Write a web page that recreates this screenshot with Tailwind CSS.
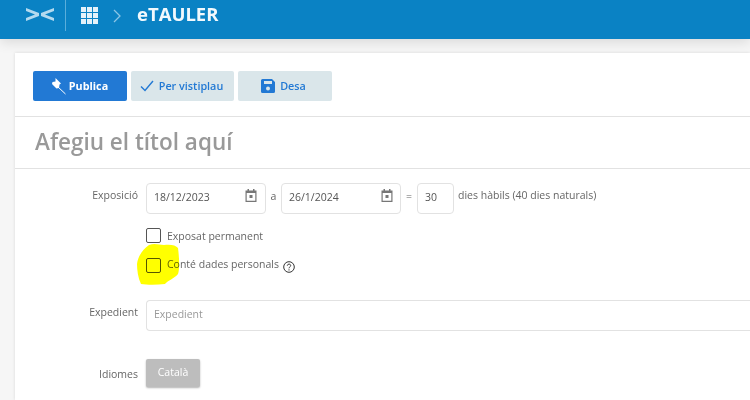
<!DOCTYPE html>
<html lang="ca">
<head>
  <meta charset="UTF-8" />
  <title>eTAULER</title>
  <script src="https://cdn.jsdelivr.net/npm/@tailwindcss/browser@4"></script>
</head>
<body class="h-[400px] w-[750px] overflow-hidden bg-[#f6f6f6] font-['Open_Sans',sans-serif]">
  <!-- capçalera -->
  <header class="flex h-[39px] items-center bg-[#0a82c4] shadow-[0_3px_12px_rgba(0,0,0,0.12)]">
    <svg class="ml-[26px] h-[13px] w-[28px] -translate-y-[5px]" viewBox="0 0 28 13" fill="#b4daef">
      <path d="M0 0 13 5V8L0 13V10L9 6.500 0 3ZM28 0 15 5V8L28 13V10L19 6.500 28 3Z" />
    </svg>
    <div class="ml-[11px] h-[31px] w-px -translate-y-[4px] bg-[#5aaedb]"></div>
    <svg class="ml-[15px] h-[17px] w-[17px] -translate-y-[4px]" viewBox="0 0 17 17" fill="#e4f2fa">
      <rect x="0" y="0" width="5" height="5" /><rect x="6" y="0" width="5" height="5" /><rect x="12" y="0" width="5" height="5" />
      <rect x="0" y="6" width="5" height="5" /><rect x="6" y="6" width="5" height="5" /><rect x="12" y="6" width="5" height="5" />
      <rect x="0" y="12" width="5" height="5" /><rect x="6" y="12" width="5" height="5" /><rect x="12" y="12" width="5" height="5" />
    </svg>
    <svg class="ml-[15px] h-[14px] w-[8px] -translate-y-[4px]" viewBox="0 0 8 14" fill="none" stroke="#8cc5e5" stroke-width="1.300">
      <path d="M1 1l6 6-6 6" />
    </svg>
    <span class="ml-[16px] -translate-y-[5px] text-[18.500px] leading-none font-bold text-[#f2f9fd]">eTAULER</span>
  </header>

  <main class="relative mt-[14px] ml-[15px] h-[347px] bg-white shadow-[0_0_3px_rgba(0,0,0,0.12)]">
    <!-- botons -->
    <div class="flex h-[64px] gap-1 border-b border-[#e2e2e2] pt-[18px] pl-[18px]">
      <button class="flex h-[30px] w-[94px] items-center justify-center gap-[2px] rounded-[2px] bg-[#2279d4] pr-[3px] text-[10.800px] font-bold text-white">
        <svg class="h-[18px] w-[18px]" viewBox="0 0 18 18" fill="#fff">
          <path d="M6.500 1 12 6.500 10.500 7.500 10 11 7.500 11.500 3 7 3.500 5 6.500 4.500Z" />
          <path d="M8.500 9.500 16.500 17" stroke="#fff" stroke-width="1" />
        </svg>
        Publica
      </button>
      <button class="flex h-[30px] w-[103px] items-center justify-center gap-[5px] rounded-[2px] bg-[#dae6ea] pr-[2px] text-[10.800px] font-semibold text-[#2279d4]">
        <svg class="h-[12px] w-[14px]" viewBox="0 0 14 12" fill="none" stroke="#2279d4" stroke-width="1.400">
          <path d="M1 6.500 5 10.500 13 1" />
        </svg>
        Per vistiplau
      </button>
      <button class="flex h-[30px] w-[94px] items-center justify-center gap-[5px] rounded-[2px] bg-[#dae6ea] pr-[3px] text-[10.800px] font-semibold text-[#2279d4]">
        <svg class="h-[14px] w-[14px]" viewBox="0 0 14 14">
          <path fill="#2279d4" d="M1.500 0H11L14 3V12.500A1.500 1.500 0 0 1 12.500 14H1.500A1.500 1.500 0 0 1 0 12.500V1.500A1.500 1.500 0 0 1 1.500 0Z" />
          <rect x="3" y="2" width="8" height="3" fill="#dae6ea" />
          <circle cx="7" cy="9.500" r="2" fill="#dae6ea" />
        </svg>
        Desa
      </button>
    </div>

    <!-- títol -->
    <div class="flex h-[52px] items-center border-b border-[#e2e2e2] pb-[2px] pl-[20px] text-[22.500px] font-semibold text-[#999]">Afegiu el títol aquí</div>

    <!-- formulari -->
    <div class="grid grid-cols-[123px_1fr] gap-x-[8px] pt-[14px] text-[10.500px] text-[#666]">
      <div class="pt-[5px] text-right">Exposició</div>
      <div class="flex items-start">
        <div class="flex h-[31px] w-[120px] items-center justify-between rounded-[4px] border border-[#e2e2e2] pr-[8px] pl-[7px] text-[#555]">
          <span class="pb-[1px]">18/12/2023</span>
          <svg class="mb-[7px] h-[13px] w-[12px]" viewBox="0 0 11 13" fill="#777"><path d="M2 0h1.500v1.500h4V0H9v1.500h2V13H0V1.500h2ZM1.200 4v7.800h8.600V4Z" /><rect x="4" y="6" width="3" height="3" /></svg>
        </div>
        <span class="w-[15px] pt-[6px] text-center">a</span>
        <div class="flex h-[31px] w-[120px] items-center justify-between rounded-[4px] border border-[#e2e2e2] pr-[7px] pl-[7px] text-[#555]">
          <span class="pb-[1px]">26/1/2024</span>
          <svg class="mb-[7px] h-[13px] w-[12px]" viewBox="0 0 11 13" fill="#777"><path d="M2 0h1.500v1.500h4V0H9v1.500h2V13H0V1.500h2ZM1.200 4v7.800h8.600V4Z" /><rect x="4" y="6" width="3" height="3" /></svg>
        </div>
        <span class="w-[16px] pt-[6px] text-center">=</span>
        <div class="flex h-[31px] w-[37px] items-center rounded-[4px] border border-[#e2e2e2] pl-[7px] text-[#555]"><span class="pb-[1px]">30</span></div>
        <span class="pt-[5px] pl-[4px]">dies hàbils (40 dies naturals)</span>
      </div>

      <div></div>
      <div class="mt-[14px] flex h-[15px] items-center gap-[6px]">
        <span class="h-[15px] w-[15px] rounded-[2px] border border-[#555] bg-white"></span>
        <span class="translate-y-px">Exposat permanent</span>
      </div>

      <div></div>
      <div class="mt-[15px] flex h-[15px] items-center gap-[6px]">
        <span class="h-[15px] w-[15px] rounded-[2px] border border-[#555] bg-white"></span>
        <span class="-translate-y-px">Conté dades personals</span>
        <svg class="ml-[-2px] h-[12px] w-[12px] translate-y-px" viewBox="0 0 12 12" fill="none" stroke="#333">
          <circle cx="6" cy="6" r="5.300" />
          <path d="M4.300 4.700C4.300 2.600 7.700 2.600 7.700 4.600 7.700 5.900 6 5.900 6 7.300" />
          <path d="M6 8.300v1.200" />
        </svg>
      </div>

      <div class="mt-[27px] pt-[5px] text-right">Expedient</div>
      <div class="mt-[27px] flex h-[31px] items-center rounded-l-[4px] border border-r-0 border-[#e2e2e2] pb-[2px] pl-[7px] text-[#999]">Expedient</div>

      <div class="mt-[28px] pt-[8px] text-right">Idiomes</div>
      <div class="mt-[28px]">
        <button class="h-[28px] w-[54px] rounded-[2px] bg-[#bdbdbd] pb-[1px] text-[10.500px] font-medium text-white shadow-[0_1px_2px_rgba(0,0,0,0.3)]">Català</button>
      </div>
    </div>

    <!-- marca groga a sobre -->
    <svg class="pointer-events-none absolute top-[191px] left-[122px] h-[41px] w-[43px] mix-blend-multiply" viewBox="0 0 43 41" fill="#ffff00">
      <path d="M12 1C18 -1 22 1 27 1 33 0 39 1 41 4 42 12 43 24 41 30 37 35 31 36 28 40 20 41 10 41 4 40 1 34 0 26 0 20 1 12 6 5 12 1Z" />
    </svg>
  </main>
</body>
</html>
